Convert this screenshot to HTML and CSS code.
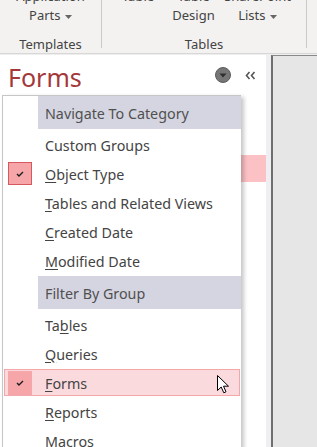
FILE: index.html
```html
<!DOCTYPE html>
<html lang="en">
<head>
<meta charset="utf-8">
<title>Navigation pane menu</title>
<link rel="stylesheet" href="styles.css">
</head>
<body>
<div class="app">
  <div class="ribbon">
    <div class="group g1">
      <div class="cmds">
        <div class="cmd"><span>Application</span><span>Parts <svg class="dd" width="7" height="4" viewBox="0 0 7 4"><path d="M0 0H7L3.5 4Z"/></svg></span></div>
      </div>
      <div class="glabel">Templates</div>
    </div>
    <div class="sep"></div>
    <div class="group g2">
      <div class="cmds">
        <div class="cmd"><span>Table</span><span>&nbsp;</span></div>
        <div class="cmd"><span>Table</span><span>Design</span></div>
        <div class="cmd"><span>SharePoint</span><span>Lists <svg class="dd" width="7" height="4" viewBox="0 0 7 4"><path d="M0 0H7L3.5 4Z"/></svg></span></div>
      </div>
      <div class="glabel">Tables</div>
    </div>
    <div class="sep"></div>
  </div>

  <div class="main">
    <div class="nav">
      <div class="nav-head">
        <span class="title">Forms</span>
        <svg class="circle-ic" width="16" height="16" viewBox="0 0 16 16"><circle cx="8" cy="8" r="7.5" fill="#767676" stroke="#5c5c5c"/><path d="M4.5 6.5H11.5L8 10.5Z" fill="#2e2e2e"/></svg>
        <svg class="chev-ic" width="11" height="9" viewBox="0 0 11 9"><path d="M4.5 1L1.5 4.5L4.5 8M9.5 1L6.5 4.5L9.5 8" fill="none" stroke="#555" stroke-width="1.6"/></svg>
      </div>
      <div class="nav-list">
        <div class="nav-sel"></div>
      </div>
    </div>
    <div class="splitter"></div>
    <div class="workspace"></div>
  </div>

  <div class="menu">
    <div class="menu-head">Navigate To Category</div>
    <div class="row"><div class="row-in"><span class="check"></span><span class="lbl">Custom Groups</span></div></div>
    <div class="row"><div class="row-in"><span class="check"><span class="box"><svg width="8" height="6" viewBox="0 0 8 6"><path d="M1 3L3 5L7 1" fill="none" stroke="#1e1e1e" stroke-width="1.4"/></svg></span></span><span class="lbl"><u>O</u>bject Type</span></div></div>
    <div class="row"><div class="row-in"><span class="check"></span><span class="lbl"><u>T</u>ables and Related Views</span></div></div>
    <div class="row"><div class="row-in"><span class="check"></span><span class="lbl"><u>C</u>reated Date</span></div></div>
    <div class="row"><div class="row-in"><span class="check"></span><span class="lbl"><u>M</u>odified Date</span></div></div>
    <div class="menu-head">Filter By Group</div>
    <div class="row"><div class="row-in"><span class="check"></span><span class="lbl">Ta<u>b</u>les</span></div></div>
    <div class="row"><div class="row-in"><span class="check"></span><span class="lbl"><u>Q</u>ueries</span></div></div>
    <div class="row sel"><div class="row-in"><span class="check"><span class="box"><svg width="8" height="6" viewBox="0 0 8 6"><path d="M1 3L3 5L7 1" fill="none" stroke="#1e1e1e" stroke-width="1.4"/></svg></span></span><span class="lbl"><u>F</u>orms</span></div></div>
    <div class="row"><div class="row-in"><span class="check"></span><span class="lbl"><u>R</u>eports</span></div></div>
    <div class="row"><div class="row-in"><span class="check"></span><span class="lbl"><u>M</u>acros</span></div></div>
  </div>

  <svg class="cursor" width="13" height="19" viewBox="0 0 13 19"><path d="M0.5 0.5V15.5L4.2 12L6.8 17.8L9 16.8L6.5 11.2H11.5Z" fill="#fff" stroke="#000" stroke-width="1" stroke-linejoin="round"/></svg>
</div>
</body>
</html>
```

FILE: styles.css
```css
* { box-sizing: border-box; }

body {
  margin: 0;
  font-family: "Noto Sans", "Open Sans", sans-serif;
  font-size: 14.3px;
  color: #444;
}

.app {
  position: relative;
  width: 317px;
  height: 447px;
  overflow: hidden;
  background: #fff;
  display: flex;
  flex-direction: column;
}

/* Ribbon */
.ribbon {
  flex: none;
  height: 54px;
  display: flex;
  background: #f3f2f1;
  border-bottom: 1px solid #d8d8d8;
  overflow: hidden;
  color: #444;
  font-size: 13px;
}

.group {
  height: 53px;
  display: flex;
  flex-direction: column;
  justify-content: flex-end;
  align-items: center;
  flex: none;
}

.g1 { width: 101px; }
.g2 { width: 204px; }

.sep {
  flex: none;
  width: 1px;
  height: 48px;
  background: #c9c9c9;
}

.cmds {
  display: flex;
  line-height: 19px;
}

.g2 .cmds {
  align-self: stretch;
  display: grid;
  grid-template-columns: 50px 61px 67px;
  padding-left: 11px;
}

.cmd {
  display: flex;
  flex-direction: column;
  align-items: center;
  white-space: nowrap;
}

.dd {
  fill: #666;
  vertical-align: middle;
  margin-left: 1px;
}

.glabel {
  line-height: 18px;
  margin-top: 10px;
}

/* Main area */
.main {
  flex: 1;
  display: flex;
  border-top: 1px solid #eeeeee;
}

.nav {
  width: 266px;
  flex: none;
  background: #fff;
}

.nav-head {
  height: 40px;
  display: flex;
  align-items: center;
  padding: 0 10px 0 8px;
}

.title {
  flex: 1;
  font-size: 25px;
  line-height: 30px;
  color: #a4373a;
  padding-top: 3px;
}

.circle-ic { margin-right: 14px; }

.nav-list { padding-top: 60px; }

.nav-sel {
  height: 27px;
  margin-left: 3px;
  background: #fcc1c5;
}

.splitter {
  width: 5px;
  flex: none;
  background: #efeff3;
}

.workspace {
  flex: 1;
  background: #e6e6e6;
  border-left: 2px solid #6e6e6e;
  border-top: 1px solid #8a8a8a;
}

/* Dropdown menu */
.menu {
  position: absolute;
  left: 2px;
  top: 95px;
  width: 239px;
  height: 360px;
  background: #fff;
  border-left: 1px solid #c6c6c6;
  border-top: 1px solid #c6c6c6;
  box-shadow: 3px 2px 4px rgba(0, 0, 0, 0.22);
}

.menu-head {
  height: 33px;
  margin: 0 0 1px 35px;
  padding: 1px 0 0 7px;
  display: flex;
  align-items: center;
  background: #d5d5e1;
  color: #505050;
}

.row + .menu-head { margin-top: 1px; }

.row {
  height: 29px;
  padding: 1px;
}

.row-in {
  height: 27px;
  display: flex;
  align-items: center;
  border: 1px solid transparent;
  white-space: nowrap;
}

.lbl { padding-top: 1px; }

.row.sel .row-in {
  background: #fadadd;
  border-color: #f4a7ab;
}

.check {
  width: 40px;
  flex: none;
  display: flex;
  align-items: center;
  padding-left: 3px;
}

.box {
  width: 24px;
  height: 23px;
  display: flex;
  align-items: center;
  justify-content: center;
  background: #f6a5a9;
  border: 1px solid #d4585d;
}

.row.sel .box {
  height: 24px;
  border-color: #f4a6aa;
}

u { text-underline-offset: 2px; }

.cursor {
  position: absolute;
  left: 217px;
  top: 375px;
}
```
